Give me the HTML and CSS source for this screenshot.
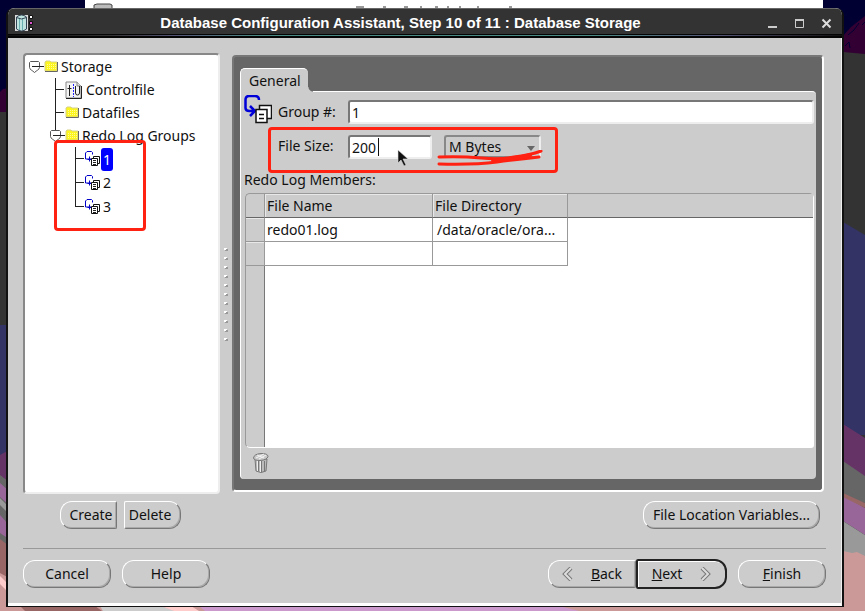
FILE: index.html
```html
<!DOCTYPE html>
<html lang="en">
<head>
<meta charset="utf-8">
<title>Database Configuration Assistant</title>
<link rel="stylesheet" href="styles.css">
</head>
<body>
<svg width="0" height="0" class="defs" aria-hidden="true">
  <defs>
    <symbol id="folder" viewBox="0 0 15 13"><path d="M1 11V2l1-1h4l1 1h6v9z" fill="#fdf61e" stroke="#d6d28a"/><path d="M3 4.500h9M3 6.500h9M3 8.500h9" stroke="#fffa9c" stroke-dasharray="1 1"/><path d="M1 11.500h12.500V2" fill="none" stroke="#666"/></symbol>
    <symbol id="handle" viewBox="0 0 12 12"><path d="M1.500.5h8l1 1v5c0 2-3 3-5 5-2-2-5-3-5-5v-5z" fill="#fff" stroke="#555"/><path d="M3 5.500h9" stroke="#222"/></symbol>
    <symbol id="control" viewBox="0 0 17 18"><path d="M1 1h11l4 4v12H1z" fill="#f4f4f4" stroke="#888"/><path d="M12 1v4h4" fill="#ddd" stroke="#888"/><path d="M1 17.500h15.500V5" fill="none" stroke="#222"/><path d="M4.500 4v11M2.500 7.500h4M10.500 5v7q0 2 2 2t2-2V5" fill="none" stroke="#222"/><path d="M8.500 3v13" stroke="#22f" stroke-dasharray="2 1"/></symbol>
    <symbol id="redo" viewBox="0 0 28 29"><path d="M15 5q0-4-4-4H5Q1.500 1 1.500 5v8q0 3 4 3h5M6 11l5 5-5 5" fill="none" stroke="#0000d8" stroke-width="2.500"/><path d="M15.500 10.500h12v13h-12z" fill="#fff" stroke="#111" stroke-width="1.500"/><path d="M12 14.500h11v13H12z" fill="#fff" stroke="#111" stroke-width="1.500"/><path d="M15 19.500h5M15 23.500h5" stroke="#111" stroke-width="1.500"/></symbol>
    <symbol id="redo-small" viewBox="0 0 16 16"><path d="M7.500 3.500v-2l-1-1H2L.5 2v6H6M4.500 5.500v5M2.500 8.500h4" fill="none" stroke="#0000c8"/><path d="M8.500 5.500h6v7h-6z" fill="#fff" stroke="#111"/><path d="M6.500 7.500h6v7h-6z" fill="#fff" stroke="#111"/><path d="M8 9.500h3M8 11.500h3M8 13.500h3" stroke="#222"/></symbol>
  </defs>
</svg>
<svg class="wallpaper" viewBox="0 0 865 611" preserveAspectRatio="none" aria-hidden="true">
  <rect width="865" height="611" fill="#333"/>
  <path d="M0 0h865v35l-22 15H0z" fill="#003"/>
  <path d="M0 50h9v42H0z" fill="#003"/>
  <path d="M0 92l3-3 6-1v24H0zM843 36l8-9 9-7 5-4v38l-22-2z" fill="#330033"/>
  <path d="M848 35l6-5 5-7M845 46l4-4 1 6M862 25l3-3" stroke="#003" fill="none"/>
  <path d="M85 0h738v12H85z" fill="#fff"/>
  <path d="M94 12V5l3-1h13l2 1v7z" fill="#bbb" stroke="#444"/>
  <path d="M356 7h8M383 7h3M404 7h4M420 7h2M435 7h3M447 7h2M459 7h2M477 7h2M509 7h3" stroke="#333"/>
  <path d="M0 325h9v136H0zM843 222l22 13v200H843z" fill="#336"/>
  <path d="M0 455l9-5v35H0zM843 424l22 14v57l-22-12z" fill="#636"/>
  <path d="M0 475l9 7v129H0zM843 461l22 15v27l-22-7z" fill="#666"/>
  <path d="M0 483l9 8v14l-9-8zM0 515l9 10v14l-9-6zM843 495l22 13v27l-22-14z" fill="#969"/>
  <path d="M0 498l9 9v7l-9-9zM843 521l22 14v21h-22z" fill="#999"/>
  <path d="M0 539l9 7v65H0z" fill="#966"/>
  <path d="M843 493l22 10v5l-22-11z" fill="#966"/>
  <path d="M843 551l9 2 5-1 8 4v55H0v-38l9 5v26h834z" fill="#c99"/>
  <path d="M20 606h75l7 5H25z" fill="#966"/>
  <path d="M100 606h61l14 5h-72z" fill="#ccc"/>
  <path d="M161 606h30l8 5h-25z" fill="#fcc"/>
  <path d="M199 606h360l20 5H205z" fill="#c9c"/>
  <path d="M0 576l9 9v8l-9-9z" fill="#fcc"/>
</svg>
<main class="window">
  <header class="titlebar">
    <svg class="app-icon" width="20" height="20" viewBox="0 0 20 20" aria-hidden="true"><path d="M1 2h13v16H1z" fill="#ddd"/><path d="M2.500 4q5-4 10 0v12q-5 4-10 0z" fill="#bfe3df" stroke="#345"/><path d="M5.500 5v12M8.500 5v12" stroke="#6ab0b0"/><path d="M2.500 4.500q5 3 10 0" fill="none" stroke="#345"/><path d="M15.500 2.500h3v3h-3zM15.500 14.500h3v3h-3z" fill="#fff" stroke="#111"/><path d="M15.500 8.500h3v3h-3z" fill="#d5c" stroke="#111"/></svg>
    <h1>Database Configuration Assistant, Step 10 of 11 : Database Storage</h1>
    <div class="controls">
      <button aria-label="Minimize"><svg width="11" height="11"><path d="M1 9h9" stroke="#ccc" stroke-width="2"/></svg></button>
      <button aria-label="Maximize"><svg width="11" height="11"><path d="M1.500 1.500h8v8h-8z" fill="none" stroke="#ccc"/><path d="M1 2h9" stroke="#ccc" stroke-width="2"/></svg></button>
      <button aria-label="Close"><svg width="11" height="11"><path d="M1.500 1.500l8 8M9.500 1.500l-8 8" stroke="#ddd" stroke-width="2"/></svg></button>
    </div>
  </header>
  <div class="content">
    <div class="workspace">
      <nav class="tree" aria-label="Storage objects">
        <ul>
          <li>
            <div class="node root"><svg width="12" height="12"><use href="#handle"/></svg><svg width="3" height="13"><path d="M0 6.500h3" stroke="#222"/></svg><svg width="15" height="13"><use href="#folder"/></svg><span>Storage</span></div>
            <ul class="level-two">
              <li><div class="node wide"><svg width="17" height="18"><use href="#control"/></svg><span>Controlfile</span></div></li>
              <li><div class="node"><svg width="15" height="13"><use href="#folder"/></svg><span>Datafiles</span></div></li>
              <li>
                <div class="node group"><svg width="12" height="12"><use href="#handle"/></svg><svg width="3" height="13"><path d="M0 6.500h3" stroke="#222"/></svg><svg width="15" height="13"><use href="#folder"/></svg><span>Redo Log Groups</span></div>
                <ul class="level-three">
                  <li><div class="node selected"><svg width="16" height="16"><use href="#redo-small"/></svg><span>1</span></div></li>
                  <li><div class="node"><svg width="16" height="16"><use href="#redo-small"/></svg><span>2</span></div></li>
                  <li><div class="node"><svg width="16" height="16"><use href="#redo-small"/></svg><span>3</span></div></li>
                </ul>
              </li>
            </ul>
          </li>
        </ul>
        <div class="mark mark-tree"></div>
      </nav>
      <div class="splitter"><svg width="4" height="94" viewBox="0 0 4 94"><defs><pattern id="grip" width="4" height="9" patternUnits="userSpaceOnUse"><path d="M0 0h3v2H0z" fill="#fff"/><path d="M2 1h2v2H1V2h1z" fill="#999"/></pattern></defs><rect width="4" height="94" fill="url(#grip)"/></svg></div>
      <section class="panel">
        <div class="tab">General</div>
        <div class="card">
          <div class="form">
            <svg class="redo-icon" width="28" height="29" aria-hidden="true"><use href="#redo"/></svg>
            <label for="group">Group #:</label>
            <input id="group" type="text" value="1">
            <label for="size" class="size-label">File Size:</label>
            <div class="size-row">
              <div class="size-field"><input id="size" type="text" value="200"><i class="caret"></i></div>
              <div class="select"><select aria-label="Size unit"><option>M Bytes</option></select><svg width="8" height="5"><path d="M0 0h8L4 5z" fill="#666"/></svg></div>
            </div>
            <div class="mark mark-size"></div>
            <svg class="scribble" width="110" height="18" viewBox="0 0 110 18" fill="none" stroke="#ff2112" stroke-width="4" stroke-linecap="round" stroke-linejoin="round" aria-hidden="true"><path d="M3 7Q25 6 45 8t33-1q16-2 27-6M3 14q35 1 58-2t42-5" stroke-width="3"/><path d="M57 10Q80 9 94 5"/></svg>
            <svg class="pointer" width="12" height="18" viewBox="0 0 12 18" aria-hidden="true"><path d="M1 1v13l3-3 3 6 2-1-3-6h5z" fill="#111" stroke="#ddd" stroke-width=".6"/></svg>
          </div>
          <h2>Redo Log Members:</h2>
          <div class="grid">
            <table>
              <colgroup><col class="col-head"><col class="col-name"><col class="col-dir"><col></colgroup>
              <thead><tr><td></td><th>File Name</th><th>File Directory</th><td></td></tr></thead>
              <tbody>
                <tr><th></th><td>redo01.log</td><td>/data/oracle/ora...</td><td class="rest"></td></tr>
                <tr><th></th><td></td><td></td><td class="rest"></td></tr>
              </tbody>
            </table>
          </div>
          <button class="trash" aria-label="Remove member"><svg width="18" height="22" viewBox="0 0 18 22"><path d="M3 7l1 12q5 3 10 0l1-12z" fill="#bbb" stroke="#777"/><path d="M6.500 9v10M9.500 9v11M12.500 9v10" stroke="#777"/><path d="M5.500 9v10M8.500 9v11" stroke="#eee"/><path d="M1.500 6Q2 2 9 1.500q7 0 7 3Q15 8 8 8.500 2 8.500 1.500 6z" fill="#c8c8c8" stroke="#777"/><path d="M4 6l8-4M7 7l7-4M5 3l7 3" stroke="#f4f4f4"/></svg></button>
        </div>
      </section>
    </div>
    <div class="actions">
      <div class="pair"><button class="btn left">Create</button><button class="btn right">Delete</button></div>
      <button class="btn variables">File Location Variables...</button>
    </div>
    <footer class="footer">
      <button class="btn">Cancel</button>
      <button class="btn">Help</button>
      <div class="steps">
        <button class="btn left"><svg width="12" height="14" viewBox="0 0 12 14"><path d="M9 1L3 7l6 6" fill="none" stroke="#777" stroke-width="4"/><path d="M9 1L3 7l6 6" fill="none" stroke="#ddd" stroke-width="2"/></svg><span><u>B</u>ack</span></button>
        <button class="btn right default"><span><u>N</u>ext</span><svg width="12" height="14" viewBox="0 0 12 14"><path d="M3 1l6 6-6 6" fill="none" stroke="#777" stroke-width="4"/><path d="M3 1l6 6-6 6" fill="none" stroke="#ddd" stroke-width="2"/></svg></button>
      </div>
      <button class="btn"><span><u>F</u>inish</span></button>
    </footer>
  </div>
</main>
</body>
</html>
```
FILE: styles.css
```css
* { box-sizing: border-box; }

body {
  margin: 0;
  min-height: 100vh;
  padding: 8px 21px 4px 6px;
  display: flex;
  position: relative;
  overflow: hidden;
  background: #333;
  color: #111;
  font: 14px/20px "Noto Sans", sans-serif;
}

svg { display: block; flex: none; }
ul { list-style: none; margin: 0; padding: 0; }
button, input, select { font: inherit; color: inherit; margin: 0; }
button { padding: 0; border: 0; background: none; }

.defs { position: absolute; }
.wallpaper { position: absolute; inset: 0; width: 100%; height: 100%; }

.window {
  position: relative;
  flex: 1;
  min-width: 0;
  display: flex;
  flex-direction: column;
  border: solid #111;
  border-width: 0 2px 1px;
  border-radius: 8px 8px 0 0;
  background: #ccc;
}

.titlebar {
  display: flex;
  align-items: center;
  height: 30px;
  padding: 0 10px 0 6px;
  background:
    linear-gradient(90deg, #111, #333 12%, #557 20%, #4a8a84 30%, #4a8a84 70%, #557 85%, #111) 0 27px / 100% 1px no-repeat,
    linear-gradient(#666 1px, #333 1px, #333 26px, #050505 26px);
  border-radius: 7px 7px 0 0;
  color: #fff;
}
.titlebar h1 {
  flex: 1;
  margin: 0;
  text-align: center;
  font: bold 15px/20px "Liberation Sans", sans-serif;
}
.controls { display: flex; gap: 16px; }

.content {
  flex: 1;
  display: flex;
  flex-direction: column;
  padding: 15px 15px 15px;
  border-right: 1px solid #eee;
  border-bottom: 3px solid #fff;
}

.workspace {
  flex: 1;
  display: grid;
  grid-template-columns: 197px 12px minmax(0, 1fr);
  padding-right: 2px;
}

.tree {
  position: relative;
  padding: 0 4px;
  border: solid;
  border-width: 2px;
  border-color: #888 #eee #eee #888;
  border-radius: 4px;
  background: #fff;
}
.node { display: flex; align-items: center; height: 23px; white-space: nowrap; }
.node span { padding: 0 2px; }
.level-two { padding-left: 26px; position: relative; }
.level-two > li > .node { padding-left: 10px; }
.level-two > li > .group { padding-left: 0; margin-left: -5px; }
.level-two::before, .level-three::before {
  content: "";
  position: absolute;
  left: 26px;
  top: 0;
  width: 1px;
  height: 52px;
  background: #222;
}
.level-two > li > .node:not(.group), .level-three .node {
  background: linear-gradient(#222, #222) 0 11px / 9px 1px no-repeat;
}
.level-two .wide span { padding-left: 4px; }
.level-three { position: relative; padding-left: 20px; }
.level-three::before { left: 20px; height: 60px; }
.level-three .node { height: 24px; padding-left: 10px; }
.selected span { background: #00f; color: #fff; border-radius: 3px; line-height: 23px; }

.mark { position: absolute; border: 3px solid #ff2112; border-radius: 4px; pointer-events: none; }
.mark-tree { left: 29px; top: 85px; width: 92px; height: 91px; }
.mark-size { left: 24px; right: 256px; top: 32px; height: 46px; }

.splitter { display: flex; align-items: center; justify-content: center; padding-top: 42px; }

.panel {
  display: flex;
  flex-direction: column;
  align-items: flex-start;
  margin: 2px 0 2px;
  padding: 11px 6px 11px;
  border: 2px solid;
  border-color: #777 #fff #fff #777;
  border-radius: 4px;
  background: #666;
}
.tab {
  position: relative;
  z-index: 1;
  height: 24px;
  margin-bottom: -1px;
  padding: 2px 7px 0 8px;
  border: solid #fff;
  border-width: 1px 0 0 1px;
  border-radius: 5px 5px 0 0;
  background: #ccc;
}
.tab::after {
  content: "";
  position: absolute;
  left: 100%;
  bottom: 0;
  width: 5px;
  height: 5px;
  background: radial-gradient(circle at 100% 0, #666 4px, #ccc 5px);
}
.card {
  align-self: stretch;
  flex: 1;
  display: flex;
  flex-direction: column;
  padding: 3px 2px 5px 3px;
  border: solid #fff;
  border-width: 1px 0 0 1px;
  border-radius: 0 4px 4px 4px;
  background: #ccc;
}
.form {
  position: relative;
  display: grid;
  grid-template-columns: 28px 64px minmax(0, 1fr);
  grid-template-rows: 33px 42px;
  column-gap: 6px;
}
.form label { line-height: 33px; }
.form .size-label { grid-column: 2; line-height: 36px; }
.form input {
  width: 100%;
  height: 24px;
  padding: 0 2px;
  border: 2px solid;
  border-color: #777 #eee #eee #777;
  border-radius: 3px;
  background: #fff;
  outline: 0;
}
.form > input { margin-top: 5px; }
.size-row { display: flex; gap: 12px; padding-top: 7px; }
.size-field { position: relative; width: 84px; }
.size-field .caret { position: absolute; left: 30px; top: 3px; width: 1px; height: 18px; background: #111; }
.select { position: relative; width: 97px; height: 24px; }
.select select {
  appearance: none;
  width: 100%;
  height: 23px;
  padding: 0 3px;
  border: 2px solid;
  border-color: #888 #eee #888 #888;
  border-radius: 3px;
  background: #ccc;
}
.select svg { position: absolute; right: 6px; top: 11px; }
.scribble { position: absolute; left: 192px; top: 55px; }
.pointer { position: absolute; left: 153px; top: 54px; }

.card h2 { margin: 0; font: inherit; }
.grid {
  flex: 1;
  margin: 3px 0 0 1px;
  border: solid;
  border-width: 1px;
  border-color: #999 #fff #fff #999;
  border-radius: 5px 5px 3px 5px;
  background: linear-gradient(90deg, #ccc 18px, #777 18px, #777 19px, #fff 19px);
}
table { width: 100%; table-layout: fixed; border-collapse: separate; border-spacing: 0; }
.col-head { width: 19px; }
.col-name { width: 168px; }
.col-dir { width: 135px; }
th, td {
  height: 24px;
  padding: 0 2px;
  border: solid #999;
  border-width: 0 1px 1px 0;
  font-weight: normal;
  text-align: left;
  white-space: nowrap;
  line-height: 20px;
}
td + td { padding-left: 4px; }
thead th, thead td { border-color: #999 #999 #666; box-shadow: inset 1px 1px #e8e8e8; background: #ccc; }
thead td { box-shadow: none; }
thead td:first-child { border-radius: 5px 0 0; }
tbody th { box-shadow: inset 0 1px #e8e8e8; }
thead td:last-child { border-right: 0; }
.rest { border: 0; }
.trash { align-self: flex-start; margin: 4px 0 0 8px; }

.btn {
  display: flex;
  align-items: center;
  justify-content: center;
  height: 28px;
  width: 88px;
  border: 1px solid;
  border-color: #fff #777 #777 #fff;
  border-radius: 12px;
  box-shadow: inset -1px -1px #aaa;
  white-space: nowrap;
}
.btn.left { border-radius: 12px 2px 2px 12px; }
.btn.right { border-radius: 2px 12px 12px 2px; }
.actions {
  display: flex;
  justify-content: space-between;
  padding: 7px 6px 19px 37px;
}
.pair { display: flex; gap: 7px; }
.pair .btn { width: 57px; }
.pair .left { padding-left: 5px; }
.pair .right { padding-right: 5px; }
.actions .variables { width: 177px; }
.footer {
  display: flex;
  gap: 11px;
  padding-top: 11px;
  border-top: 1px solid #999;
}
.steps { display: flex; margin-left: auto; }
.steps .btn { gap: 17px; }
.steps .default { width: 91px; height: 30px; margin: -1px 0; border: 2px solid #222; box-shadow: inset 1px 1px #fff; }
```
